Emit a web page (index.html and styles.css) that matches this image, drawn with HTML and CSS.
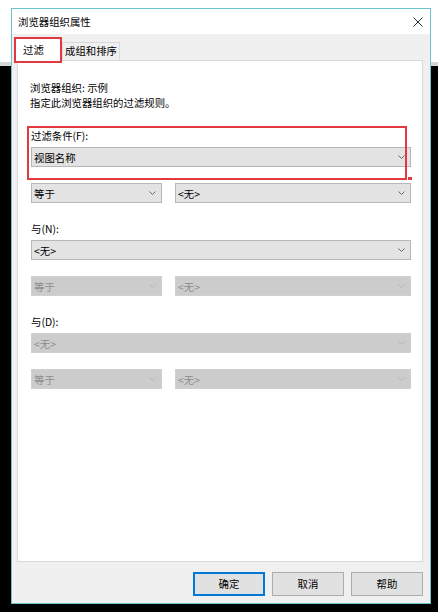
FILE: index.html
```html
<!DOCTYPE html>
<html lang="zh-CN">
<head>
    <meta charset="UTF-8">
    <meta name="viewport" content="width=device-width, initial-scale=1.0">
    <title>浏览器组织属性</title>
    <link rel="stylesheet" href="styles.css">
</head>
<body>
    <div class="dialog">
        <div class="titlebar">
            <span class="title">浏览器组织属性</span>
            <svg class="close" width="10" height="10" viewBox="0 0 10 10">
                <path d="M0.5 0.5 L9.5 9.5 M9.5 0.5 L0.5 9.5" stroke="#333" stroke-width="1" fill="none"/>
            </svg>
        </div>

        <div class="dialog-body">
            <div class="tabs">
                <div class="tab tab-active">过滤</div>
                <div class="tab">成组和排序</div>
            </div>

            <div class="panel">
                <p class="desc">浏览器组织: 示例<br>指定此浏览器组织的过滤规则。</p>

                <div class="group">
                    <div class="label">过滤条件(F):</div>
                    <div class="combo">
                        <span>视图名称</span>
                        <svg class="chev" width="7" height="4" viewBox="0 0 7 4"><path d="M0.5 0.5 L3.5 3.5 L6.5 0.5" fill="none" stroke="#666"/></svg>
                    </div>
                    <div class="row">
                        <div class="combo combo-small">
                            <span>等于</span>
                            <svg class="chev" width="7" height="4" viewBox="0 0 7 4"><path d="M0.5 0.5 L3.5 3.5 L6.5 0.5" fill="none" stroke="#666"/></svg>
                        </div>
                        <div class="combo combo-wide">
                            <span>&lt;无&gt;</span>
                            <svg class="chev" width="7" height="4" viewBox="0 0 7 4"><path d="M0.5 0.5 L3.5 3.5 L6.5 0.5" fill="none" stroke="#666"/></svg>
                        </div>
                    </div>
                </div>

                <div class="group">
                    <div class="label">与(N):</div>
                    <div class="combo">
                        <span>&lt;无&gt;</span>
                        <svg class="chev" width="7" height="4" viewBox="0 0 7 4"><path d="M0.5 0.5 L3.5 3.5 L6.5 0.5" fill="none" stroke="#666"/></svg>
                    </div>
                    <div class="row">
                        <div class="combo combo-small disabled">
                            <span>等于</span>
                            <svg class="chev" width="7" height="4" viewBox="0 0 7 4"><path d="M0.5 0.5 L3.5 3.5 L6.5 0.5" fill="none" stroke="#b5b5b5"/></svg>
                        </div>
                        <div class="combo combo-wide disabled">
                            <span>&lt;无&gt;</span>
                            <svg class="chev" width="7" height="4" viewBox="0 0 7 4"><path d="M0.5 0.5 L3.5 3.5 L6.5 0.5" fill="none" stroke="#b5b5b5"/></svg>
                        </div>
                    </div>
                </div>

                <div class="group">
                    <div class="label">与(D):</div>
                    <div class="combo disabled">
                        <span>&lt;无&gt;</span>
                        <svg class="chev" width="7" height="4" viewBox="0 0 7 4"><path d="M0.5 0.5 L3.5 3.5 L6.5 0.5" fill="none" stroke="#b5b5b5"/></svg>
                    </div>
                    <div class="row">
                        <div class="combo combo-small disabled">
                            <span>等于</span>
                            <svg class="chev" width="7" height="4" viewBox="0 0 7 4"><path d="M0.5 0.5 L3.5 3.5 L6.5 0.5" fill="none" stroke="#b5b5b5"/></svg>
                        </div>
                        <div class="combo combo-wide disabled">
                            <span>&lt;无&gt;</span>
                            <svg class="chev" width="7" height="4" viewBox="0 0 7 4"><path d="M0.5 0.5 L3.5 3.5 L6.5 0.5" fill="none" stroke="#b5b5b5"/></svg>
                        </div>
                    </div>
                </div>

                <!-- annotation box drawn over the first condition -->
                <div class="mark-box"></div>
                <div class="mark-dot"></div>
            </div>

            <div class="footer">
                <button class="btn btn-default">确定</button>
                <button class="btn">取消</button>
                <button class="btn">帮助</button>
            </div>
        </div>
    </div>
</body>
</html>
```

FILE: styles.css
```css
body {
    margin: 0;
    height: 612px;
    overflow: hidden;
    font-family: "Noto Sans CJK SC", "Liberation Sans", sans-serif;
    font-size: 10.4px;
    color: #000;
    background: linear-gradient(#fff 0, #fff 62px, #d6d6d6 62px, #d6d6d6 66px, #000 66px);
}
.dialog {
    box-sizing: border-box;
    width: 420px;
    height: 596px;
    margin: 8px 0 0 11px;
    border: 1px solid #6cc3cb;
    background-color: #f0f0f0;
    display: flex;
    flex-direction: column;
}
.titlebar {
    height: 25px;
    flex: none;
    background-color: #fff;
    display: flex;
    align-items: center;
    justify-content: space-between;
    padding: 0 7px 0 6px;
}
.title {
    line-height: 15px;
}
.close {
    display: block;
}
.dialog-body {
    flex: 1;
    display: flex;
    flex-direction: column;
    padding: 0 7px 0 5px;
}
.tabs {
    height: 26px;
    display: flex;
    align-items: flex-end;
    gap: 2px;
    padding-left: -1px;
    position: relative;
    z-index: 1;
}
.tab {
    box-sizing: border-box;
    height: 18px;
    padding: 0 2px;
    line-height: 16px;
    border: 1px solid #d9d9d9;
    border-bottom: none;
    background-color: #f0f0f0;
}
.tab-active {
    width: 44px;
    height: 22px;
    margin-left: -1px;
    margin-bottom: -1px;
    padding: 2px 0 0 6px;
    background-color: #fff;
    border-color: #fff;
    outline: 2px solid #e2393e;
}
.panel {
    flex: 1;
    position: relative;
    box-sizing: border-box;
    background-color: #fff;
    border: 1px solid #d9d9d9;
    padding: 19px 11px 0 13px;
}
.desc {
    margin: 0 0 18px -1px;
    line-height: 15px;
}
.group {
    margin-bottom: 18px;
}
.label {
    line-height: 15px;
    margin-bottom: 4px;
}
.combo {
    box-sizing: border-box;
    height: 20px;
    display: flex;
    align-items: center;
    justify-content: space-between;
    padding: 0 5px 0 2px;
    background-color: #e3e3e3;
    border: 1px solid #b7b7b7;
}
.combo.disabled {
    background-color: #cccccc;
    border-color: #d0d0d0;
    color: #8c8c8c;
}
.chev {
    display: block;
}
.row {
    display: flex;
    gap: 13px;
    margin-top: 16px;
}
.combo-small {
    width: 131px;
}
.combo-wide {
    flex: 1;
}
.mark-box {
    position: absolute;
    left: 9px;
    top: 65px;
    width: 380px;
    height: 54px;
    box-sizing: border-box;
    border: 2px solid #e2393e;
}
.mark-dot {
    position: absolute;
    left: 390px;
    top: 116px;
    width: 4px;
    height: 3px;
    background-color: #e2393e;
}
.footer {
    height: 41px;
    flex: none;
    display: flex;
    justify-content: flex-end;
    align-items: center;
    gap: 7px;
    padding-right: -1px;
}
.btn {
    box-sizing: border-box;
    width: 72px;
    height: 24px;
    margin-top: 2px;
    font-family: inherit;
    font-size: 10.4px;
    color: #000;
    background-color: #e1e1e1;
    border: 1px solid #adadad;
    padding: 0;
}
.btn-default {
    border-color: #0078d7;
    box-shadow: inset 0 0 0 1px #0078d7;
}
```
